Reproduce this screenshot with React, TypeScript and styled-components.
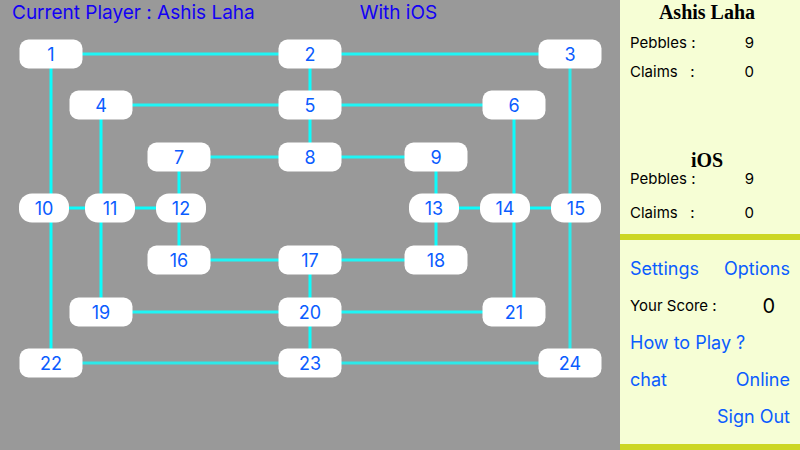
import React from "react";
import styled, { createGlobalStyle } from "styled-components";

const GlobalStyle = createGlobalStyle`
  *, *::before, *::after { box-sizing: border-box; }
  body {
    margin: 0;
    font-family: Inter, "Liberation Sans", sans-serif;
    font-feature-settings: "calt" 0;
  }
`;

const Page = styled.div`
  display: flex;
  min-height: 100vh;
`;

const Board = styled.main`
  flex: 1;
  min-width: 0;
  display: flex;
  flex-direction: column;
  background: #999999;
`;

const Header = styled.header`
  display: grid;
  grid-template-columns: 7fr 5fr;
  padding: 0 12px;
  font-size: 19px;
  line-height: 26px;
  color: #1200f5;
  white-space: nowrap;
`;

const Field = styled.div`
  position: relative;
  flex: 1;
  min-height: 380px;
`;

const Links = styled.svg`
  position: absolute;
  inset: 0;
  width: 100%;
  height: 100%;
  stroke-width: 3px;
`;

const Node = styled.button<{ $left: string; $top: string; $narrow: boolean }>`
  position: absolute;
  left: ${(p) => p.$left};
  top: ${(p) => p.$top};
  transform: translate(-50%, -50%);
  width: ${(p) => (p.$narrow ? 50 : 63)}px;
  height: 29px;
  padding: 0;
  border: 0;
  border-radius: ${(p) => (p.$narrow ? 13 : 9)}px;
  background: #ffffff;
  color: #0a5cff;
  font-family: inherit;
  font-size: 18px;
  line-height: 29px;
  cursor: pointer;
`;

const Side = styled.aside`
  flex: 0 0 180px;
  display: flex;
  flex-direction: column;
  background: #f6fed5;
  color: #000000;
`;

const Players = styled.div`
  flex: 1;
  display: flex;
  flex-direction: column;
  justify-content: space-between;
  padding-bottom: 14px;
`;

const Player = styled.section<{ $top: number; $gap: number }>`
  display: grid;
  row-gap: ${(p) => p.$gap}px;
  h2 {
    margin-bottom: ${(p) => p.$top - p.$gap}px;
  }
`;

const PlayerName = styled.h2`
  margin: 0;
  padding-right: 6px;
  font-family: "Liberation Serif", serif;
  font-size: 20px;
  font-weight: 700;
  line-height: 24px;
  text-align: center;
`;

const Stat = styled.div`
  display: flex;
  justify-content: space-between;
  padding: 0 46px 0 10px;
  font-size: 15px;
  line-height: 14px;
  white-space: pre;
`;

const Menu = styled.nav`
  display: grid;
  grid-auto-rows: 37px;
  padding: 10px 10px 9px;
  border: solid #ccd624;
  border-width: 6px 0;
`;

const MenuRow = styled.div<{ $end?: boolean }>`
  display: flex;
  align-items: center;
  justify-content: ${(p) => (p.$end ? "flex-end" : "space-between")};
  font-size: 15px;
`;

const MenuButton = styled.button`
  padding: 0;
  border: 0;
  background: none;
  color: #0a5cff;
  font-family: inherit;
  font-size: 18px;
  line-height: 24px;
  white-space: nowrap;
  cursor: pointer;
`;

const Score = styled.span`
  padding-right: 15px;
  font-size: 20px;
  line-height: 24px;
`;

const WIDTH = 620;
const HEIGHT = 424;
const across = (x: number) => `${(x / WIDTH) * 100}%`;
const down = (y: number) => `${(y / HEIGHT) * 100}%`;

const rows = [28, 79, 131, 182, 234, 286, 337];

// [label, centre x, row]
const nodes: [number, number, number][] = [
  [1, 51, 0], [2, 310, 0], [3, 570, 0],
  [4, 101, 1], [5, 310, 1], [6, 514, 1],
  [7, 179, 2], [8, 310, 2], [9, 436, 2],
  [10, 44, 3], [11, 110, 3], [12, 181, 3],
  [13, 434, 3], [14, 505, 3], [15, 576, 3],
  [16, 179, 4], [17, 310, 4], [18, 436, 4],
  [19, 101, 5], [20, 310, 5], [21, 514, 5],
  [22, 51, 6], [23, 310, 6], [24, 570, 6],
];

// [x1, row1, x2, row2, stroke]
const links: [number, number, number, number, string][] = [
  [51, 0, 570, 0, "#1ff5f5"],
  [101, 1, 514, 1, "#1ff5f5"],
  [179, 2, 436, 2, "#1ff5f5"],
  [44, 3, 181, 3, "#0cfcfc"],
  [434, 3, 576, 3, "#0cfcfc"],
  [179, 4, 436, 4, "#1ff5f5"],
  [101, 5, 514, 5, "#1ff5f5"],
  [51, 6, 570, 6, "#2ce8e8"],
  [51, 0, 51, 6, "#0cfcfc"],
  [101, 1, 101, 5, "#0cfcfc"],
  [179, 2, 179, 4, "#0cfcfc"],
  [310, 0, 310, 2, "#0cfcfc"],
  [310, 4, 310, 6, "#0cfcfc"],
  [436, 2, 436, 4, "#0cfcfc"],
  [514, 1, 514, 5, "#0cfcfc"],
  [570, 0, 570, 6, "#2cebeb"],
];

function PlayerStats(props: { name: string; pebbles: number; claims: number; top: number; gap: number }) {
  return (
    <Player $top={props.top} $gap={props.gap}>
      <PlayerName>{props.name}</PlayerName>
      <Stat><span>Pebbles :</span><span>{props.pebbles}</span></Stat>
      <Stat><span>{"Claims   :"}</span><span>{props.claims}</span></Stat>
    </Player>
  );
}

export default function App() {
  return (
    <Page>
      <GlobalStyle />
      <Board>
        <Header>
          <span>Current Player : Ashis Laha</span>
          <span>With iOS</span>
        </Header>
        <Field>
          <Links aria-hidden="true">
            {links.map(([x1, r1, x2, r2, stroke], i) => (
              <line key={i} x1={across(x1)} y1={down(rows[r1])} x2={across(x2)} y2={down(rows[r2])} stroke={stroke} />
            ))}
          </Links>
          {nodes.map(([label, x, row]) => (
            <Node key={label} type="button" $left={across(x)} $top={down(rows[row])} $narrow={row === 3}>
              {label}
            </Node>
          ))}
        </Field>
      </Board>
      <Side>
        <Players>
          <PlayerStats name="Ashis Laha" pebbles={9} claims={0} top={12} gap={15} />
          <PlayerStats name="iOS" pebbles={9} claims={0} top={0} gap={20} />
        </Players>
        <Menu>
          <MenuRow>
            <MenuButton type="button">Settings</MenuButton>
            <MenuButton type="button">Options</MenuButton>
          </MenuRow>
          <MenuRow>
            <span>Your Score :</span>
            <Score>0</Score>
          </MenuRow>
          <MenuRow>
            <MenuButton type="button">How to Play ?</MenuButton>
          </MenuRow>
          <MenuRow>
            <MenuButton type="button">chat</MenuButton>
            <MenuButton type="button">Online</MenuButton>
          </MenuRow>
          <MenuRow $end>
            <MenuButton type="button">Sign Out</MenuButton>
          </MenuRow>
        </Menu>
      </Side>
    </Page>
  );
}
